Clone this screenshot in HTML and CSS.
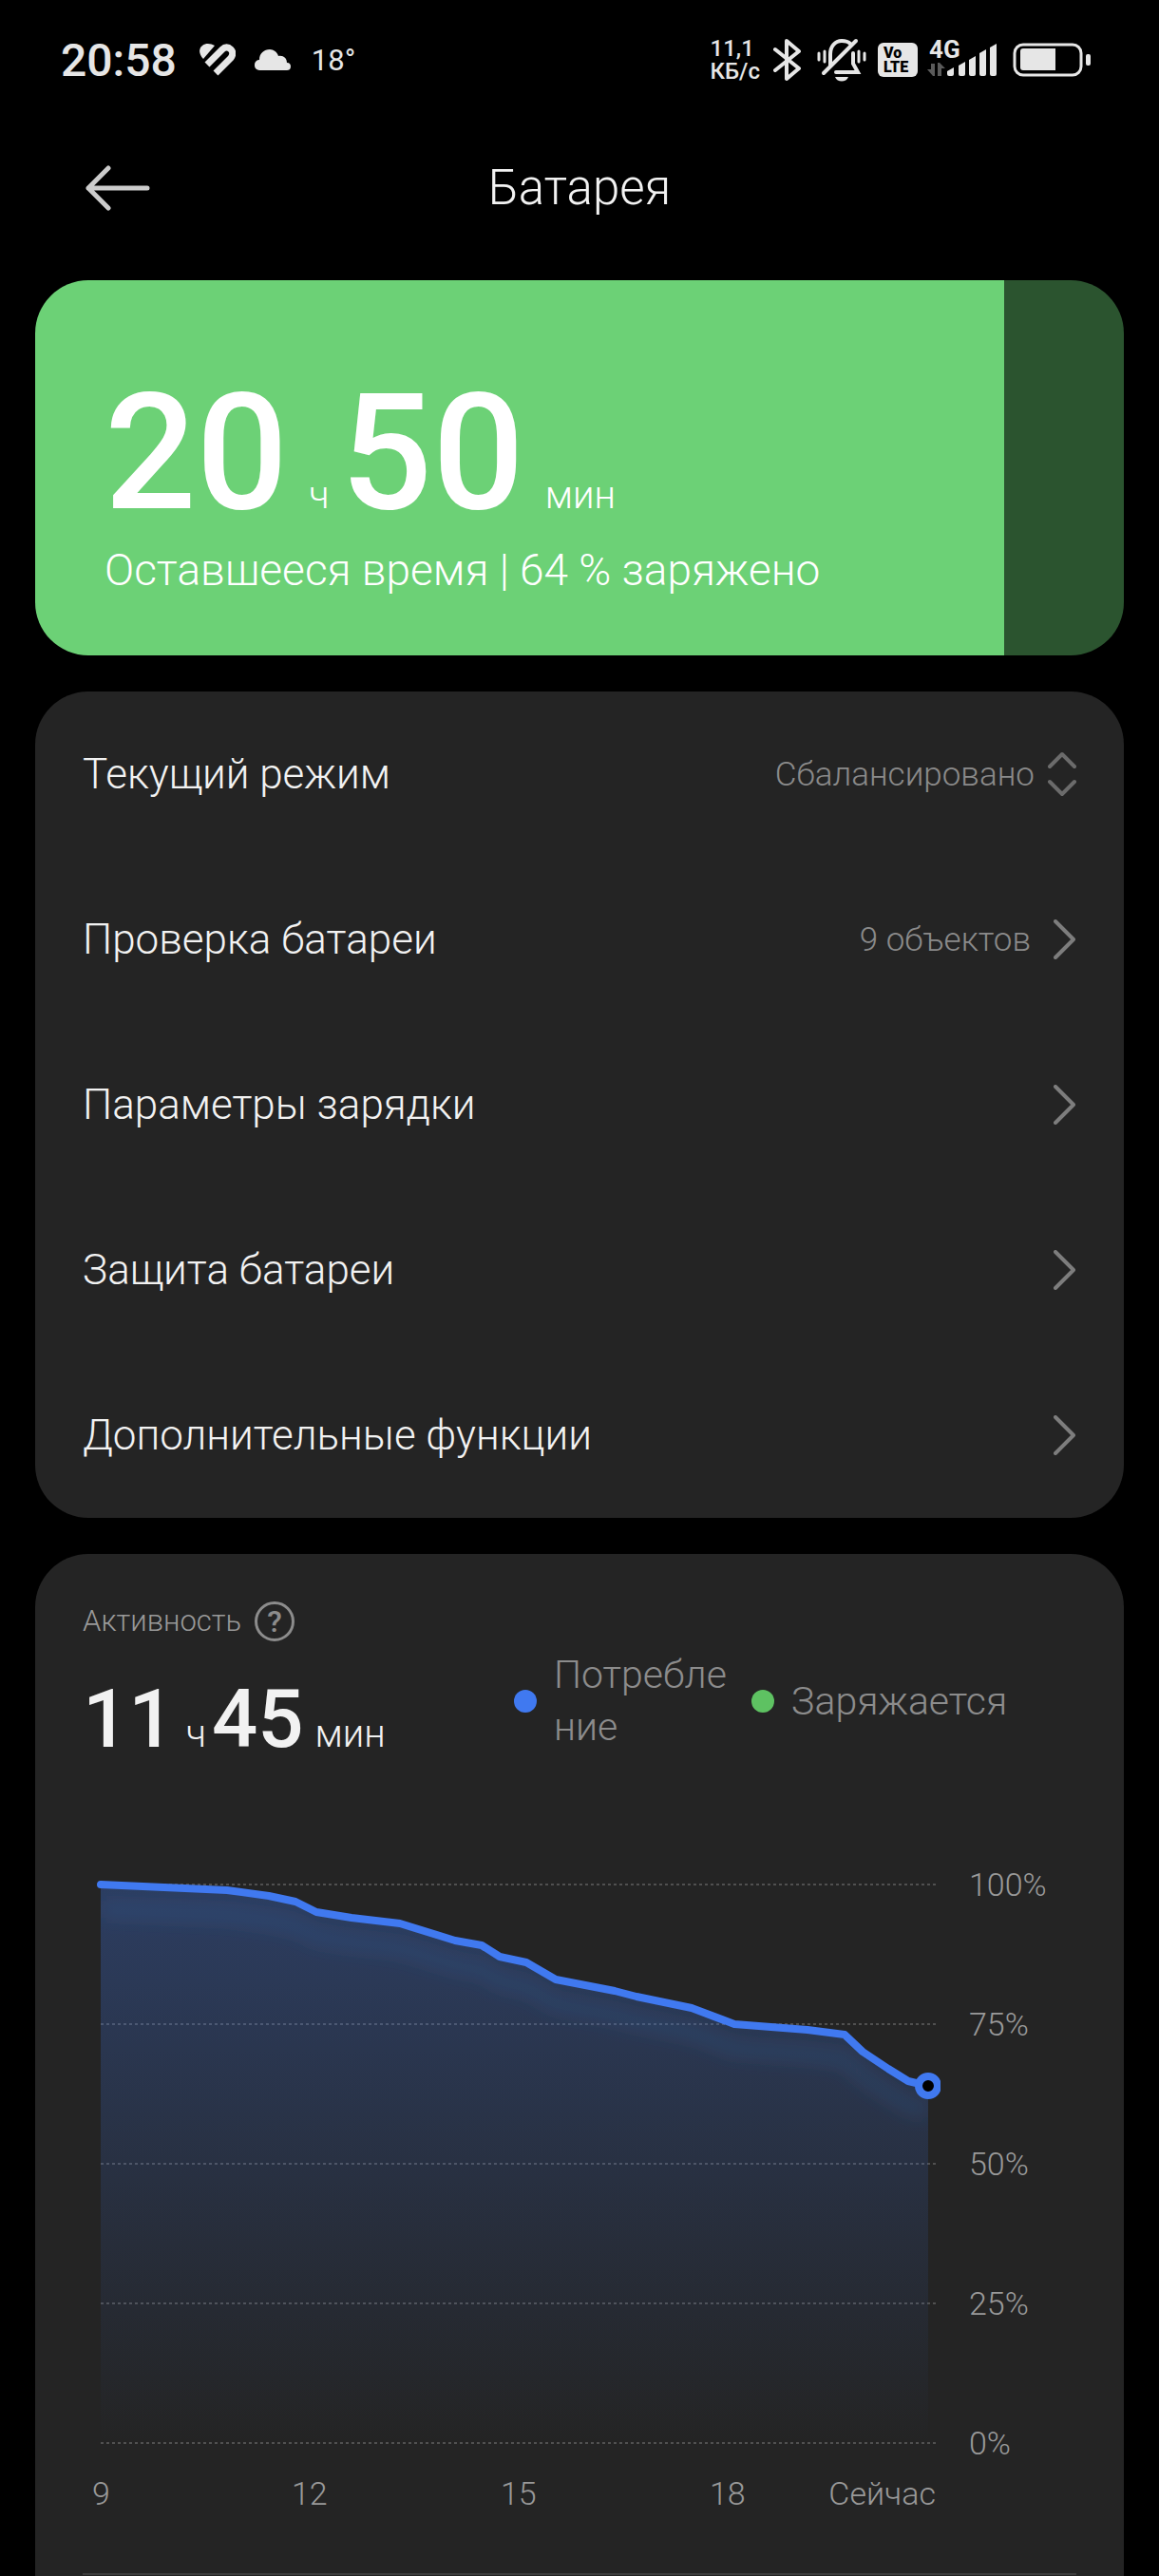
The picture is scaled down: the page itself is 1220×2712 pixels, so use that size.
FILE: index.html
```html
<!DOCTYPE html>
<html lang="ru">
<head>
    <meta charset="UTF-8">
    <meta name="viewport" content="width=device-width, initial-scale=1">
    <title>Батарея</title>
    <link rel="stylesheet" href="styles.css">
</head>
<body>
    <div class="statusbar">
        <div class="status-left">
            <span class="clock">20:58</span>
            <svg class="heart" width="38" height="34" viewBox="0 0 38 34">
                <path fill="#e6e6e6" d="M4 16C-1 11-1 5 3 2c4-3 9-2 13 0z"/>
                <path fill="none" stroke="#e6e6e6" stroke-width="7" d="M8 22 24 6c3-3 6-3 9 0s2 6 0 9L17 31"/>
            </svg>
            <svg class="cloud" width="38" height="22" viewBox="0 0 38 22">
                <path fill="#e6e6e6" d="M5 22a5 5 0 0 1-5-5v-1a5 5 0 0 1 5-5C5 4 10 0 16 0c4 0 8 3 9 7 5-1 9 2 9 7 3 0 4 2 4 4 0 3-2 4-4 4z"/>
            </svg>
            <span class="temp">18°</span>
        </div>
        <div class="status-right">
            <div class="speed"><span>11,1</span><span>КБ/с</span></div>
            <svg class="bt" width="30" height="46" viewBox="0 0 30 46">
                <path fill="none" stroke="#e6e6e6" stroke-width="4" stroke-linecap="round" stroke-linejoin="round" d="M2 12 27 32 14 43V3l13 11L2 34"/>
            </svg>
            <svg class="bell" width="52" height="46" viewBox="0 0 52 46">
                <g fill="none" stroke="#e6e6e6" stroke-width="4" stroke-linecap="round">
                    <path d="M14 29V17C14 9 19 3 26 3c4 0 7 1 9 3"/>
                    <path d="M7 37 41 3"/>
                    <path d="M38 16v11l5 9H20"/>
                    <path stroke-width="3" d="M2 16v7M8 14v11M44 14v11M50 16v7"/>
                </g>
                <path fill="#e6e6e6" d="M19 41h14c-2 6-12 6-14 0z"/>
            </svg>
            <div class="volte"><span>Vo</span><span>LTE</span></div>
            <div class="network">
                <span class="net-type">4G</span>
                <svg class="bars" width="74" height="36" viewBox="0 0 74 36">
                    <g fill="#5a5a5a"><path d="M4 22h4v13H6l-6-7h4zM11 35h4V27h4l-6-6h-2z"/></g>
                    <g fill="#e6e6e6">
                        <path d="M21 30l7-4v7q0 2-2 2h-3q-2 0-2-2z"/>
                        <path d="M33 24l7-4v13q0 2-2 2h-3q-2 0-2-2z"/>
                        <path d="M44 18l7-4v19q0 2-2 2h-3q-2 0-2-2z"/>
                        <path d="M55 11l7-4v26q0 2-2 2h-3q-2 0-2-2z"/>
                        <path d="M66 5l7-4v32q0 2-2 2h-3q-2 0-2-2z"/>
                    </g>
                </svg>
            </div>
            <svg class="battery-icon" width="82" height="36" viewBox="0 0 82 36">
                <rect x="2" y="2" width="70" height="32" rx="9" fill="none" stroke="#e6e6e6" stroke-width="3"/>
                <path fill="#e6e6e6" d="M11 6h34v23H11q-3 0-3-3V9q0-3 3-3z"/>
                <rect x="77" y="12" width="5" height="12" rx="2" fill="#e6e6e6"/>
            </svg>
        </div>
    </div>

    <header class="topbar">
        <button class="back" aria-label="Назад">
            <svg width="68" height="48" viewBox="0 0 68 48">
                <path fill="none" stroke="#cccccc" stroke-width="5" stroke-linecap="round" stroke-linejoin="round" d="M24 3 3 24l21 21M3 24h62"/>
            </svg>
        </button>
        <h1>Батарея</h1>
    </header>

    <main>
        <section class="charge">
            <div class="time time-big">
                <b>20</b><span>ч</span><b>50</b><span>мин</span>
            </div>
            <p>Оставшееся время | 64 % заряжено</p>
        </section>

        <nav class="card menu">
            <button class="row">
                <span class="name">Текущий режим</span>
                <span class="value">Сбалансировано</span>
                <svg class="updown" width="30" height="48" viewBox="0 0 30 48">
                    <path fill="none" stroke="#6b6b6b" stroke-width="4" stroke-linecap="round" stroke-linejoin="round" d="M2 16 15 3l13 13M2 32l13 13 13-13"/>
                </svg>
            </button>
            <a class="row" href="#check">
                <span class="name">Проверка батареи</span>
                <span class="value">9 объектов</span>
                <svg class="chevron" width="24" height="42" viewBox="0 0 24 42"><path d="M2 2l19 19L2 40"/></svg>
            </a>
            <a class="row" href="#charging">
                <span class="name">Параметры зарядки</span>
                <svg class="chevron" width="24" height="42" viewBox="0 0 24 42"><path d="M2 2l19 19L2 40"/></svg>
            </a>
            <a class="row" href="#protection">
                <span class="name">Защита батареи</span>
                <svg class="chevron" width="24" height="42" viewBox="0 0 24 42"><path d="M2 2l19 19L2 40"/></svg>
            </a>
            <a class="row" href="#extra">
                <span class="name">Дополнительные функции</span>
                <svg class="chevron" width="24" height="42" viewBox="0 0 24 42"><path d="M2 2l19 19L2 40"/></svg>
            </a>
        </nav>

        <section class="card activity">
            <div class="activity-head">
                <div>
                    <div class="label">
                        <h2>Активность</h2>
                        <button class="help" aria-label="Справка">?</button>
                    </div>
                    <div class="time time-small">
                        <b>11</b><span>ч</span><b>45</b><span>мин</span>
                    </div>
                </div>
                <ul class="legend">
                    <li class="usage"><i class="dot blue"></i><span>Потребление</span></li>
                    <li><i class="dot green"></i><span>Заряжается</span></li>
                </ul>
            </div>

            <div class="chart">
                <svg class="plot" viewBox="-3 0 903 620" role="img" aria-label="Заряд батареи">
                    <defs>
                        <linearGradient id="fill" x1="0" y1="0" x2="0" y2="1">
                            <stop offset="0" stop-color="#4079f0" stop-opacity=".3"/>
                            <stop offset="1" stop-color="#4079f0" stop-opacity="0"/>
                        </linearGradient>
                        <filter id="glow" x="-10%" y="-20%" width="120%" height="150%">
                            <feGaussianBlur stdDeviation="9"/>
                        </filter>
                        <clipPath id="under">
                            <path d="M16 14 149 20 193 26 221 32 243 43 280 49 331 55 389 73 417 78 436 90 464 96 495 114 557 126 580 132 638 144 683 161 760 167 799 172 818 190 845 208 866 221 887 226V602H16z"/>
                        </clipPath>
                    </defs>
                    <g stroke="#505050" stroke-width="2" stroke-dasharray="3 3">
                        <path d="M16 14H895M16 161H895M16 308H895M16 455H895M16 602H895"/>
                    </g>
                    <path fill="url(#fill)" d="M16 14 149 20 193 26 221 32 243 43 280 49 331 55 389 73 417 78 436 90 464 96 495 114 557 126 580 132 638 144 683 161 760 167 799 172 818 190 845 208 866 221 887 226V602H16z"/>
                    <g clip-path="url(#under)">
                        <path transform="translate(0 26)" filter="url(#glow)" fill="none" stroke="#3d79b8" stroke-opacity=".16" stroke-width="18" d="M16 14 149 20 193 26 221 32 243 43 280 49 331 55 389 73 417 78 436 90 464 96 495 114 557 126 580 132 638 144 683 161 760 167 799 172 818 190 845 208 866 221 887 226"/>
                    </g>
                    <path fill="none" stroke="#4079f0" stroke-width="8" stroke-linecap="round" stroke-linejoin="round" d="M16 14 149 20 193 26 221 32 243 43 280 49 331 55 389 73 417 78 436 90 464 96 495 114 557 126 580 132 638 144 683 161 760 167 799 172 818 190 845 208 866 221 887 226"/>
                    <circle cx="887" cy="226" r="10" fill="#000" stroke="#4079f0" stroke-width="8"/>
                </svg>
                <div class="y-axis">
                    <span>100%</span><span>75%</span><span>50%</span><span>25%</span><span>0%</span>
                </div>
                <div class="x-axis">
                    <span>9</span><span>12</span><span>15</span><span>18</span><span class="now">Сейчас</span>
                </div>
            </div>
            <hr>
        </section>
    </main>
</body>
</html>
```
FILE: styles.css
```css
* {
    box-sizing: border-box;
}
body {
    margin: 0;
    min-height: 100vh;
    display: flex;
    flex-direction: column;
    background: #000;
    color: #f2f2f2;
    font-family: Roboto, "Noto Sans", sans-serif;
    font-weight: 300;
}
h1, h2, p, ul {
    margin: 0;
    padding: 0;
    font-weight: 300;
}
button {
    border: 0;
    padding: 0;
    background: none;
    color: inherit;
    font: inherit;
}
svg {
    display: block;
    flex: none;
}

/* status bar */
.statusbar {
    display: flex;
    justify-content: space-between;
    align-items: center;
    height: 126px;
    padding: 0 72px 0 64px;
    color: #e6e6e6;
}
.status-left, .status-right {
    display: flex;
    align-items: center;
}
.clock {
    font-size: 48px;
    font-weight: 500;
}
.heart {
    margin-left: 24px;
}
.cloud {
    margin-left: 20px;
}
.temp {
    margin-left: 22px;
    font-size: 31px;
    font-weight: 400;
}
.speed, .volte {
    display: flex;
    flex-direction: column;
    font-size: 24px;
    line-height: 24px;
    font-weight: 500;
}
.bt {
    margin-left: 14px;
}
.bell {
    margin-left: 16px;
}
.volte {
    width: 42px;
    height: 36px;
    margin-left: 12px;
    padding: 3px 0 0 6px;
    border-radius: 6px;
    background: #e6e6e6;
    color: #000;
    font-size: 16px;
    line-height: 15px;
    font-weight: 900;
}
.network {
    position: relative;
    margin-left: 10px;
}
.net-type {
    position: absolute;
    left: 2px;
    top: -6px;
    font-size: 26px;
    line-height: 26px;
    font-weight: 700;
}
.battery-icon {
    margin-left: 16px;
}

/* title */
.topbar {
    display: grid;
    grid-template-columns: 1fr auto 1fr;
    align-items: center;
    height: 144px;
    margin-bottom: 25px;
    padding: 0 90px;
}
.topbar h1 {
    font-size: 51px;
    line-height: 60px;
}

main {
    flex: 1;
    display: flex;
    flex-direction: column;
    gap: 38px;
    padding: 0 37px;
}

/* remaining time */
.charge {
    padding: 84px 73px 66px;
    border-radius: 56px;
    background: linear-gradient(to right, #6cd176 89%, #2b542f 89%);
    color: #fff;
}
.charge p {
    font-size: 46px;
    line-height: 48px;
}
.time {
    display: flex;
    align-items: baseline;
}
.time b {
    font-weight: 500;
}
.time-big {
    font-size: 40px;
}
.time-big b {
    font-size: 170px;
    line-height: 197px;
}
.time-big span {
    margin: 0 12px 0 22px;
}

/* cards */
.card {
    border-radius: 56px;
    background: #242424;
}
.row {
    display: flex;
    align-items: center;
    width: 100%;
    height: 174px;
    padding: 0 50px;
    color: #f2f2f2;
    text-align: left;
    text-decoration: none;
}
.name {
    flex: 1;
    font-size: 44px;
}
.value {
    color: #8a8a8a;
    font-size: 35px;
}
.updown {
    margin-left: 14px;
}
.chevron {
    margin-left: 24px;
    fill: none;
    stroke: #7d7d7d;
    stroke-width: 4;
    stroke-linecap: round;
    stroke-linejoin: round;
}

/* activity */
.activity {
    flex: 1;
    padding: 50px 50px 0;
    border-radius: 56px 56px 0 0;
}
.activity-head {
    display: grid;
    grid-template-columns: 454fr 592fr;
}
.label {
    display: flex;
    align-items: center;
    gap: 14px;
    color: #999;
}
.label h2 {
    font-size: 31px;
    line-height: 42px;
}
.help {
    width: 42px;
    height: 42px;
    border: 3px solid #8c8c8c;
    border-radius: 50%;
    color: #8c8c8c;
    font-size: 32px;
    line-height: 36px;
    font-weight: 500;
}
.time-small {
    margin-top: 30px;
    font-size: 40px;
}
.time-small b {
    font-size: 85px;
    line-height: 104px;
}
.time-small span {
    margin: 0 6px 0 12px;
}
.legend {
    display: flex;
    align-items: center;
    gap: 18px;
    margin-top: 50px;
    height: 110px;
    color: #8c8c8c;
    font-size: 41px;
    line-height: 55px;
    list-style: none;
}
.legend li {
    display: flex;
    align-items: center;
    gap: 18px;
}
.usage span {
    width: 190px;
    word-break: break-all;
}
.dot {
    width: 24px;
    height: 24px;
    border-radius: 50%;
}
.blue {
    background: #4079f0;
}
.green {
    background: #5ec262;
}

/* chart */
.chart {
    display: grid;
    grid-template-columns: 903fr 143fr;
    margin-top: 108px;
    color: #999;
    font-size: 34px;
    line-height: 40px;
}
.plot {
    width: 100%;
}
.y-axis {
    display: flex;
    flex-direction: column;
    justify-content: space-between;
    padding: 0 0 4px 30px;
    line-height: 28px;
}
.x-axis {
    display: grid;
    grid-template-columns: 210fr 220fr 220fr 80fr 158fr;
    padding: 15px 5px 0 10px;
}
.now {
    text-align: right;
}
hr {
    height: 2px;
    margin: 64px 0 0;
    border: 0;
    background: #3d3d3d;
}
```
